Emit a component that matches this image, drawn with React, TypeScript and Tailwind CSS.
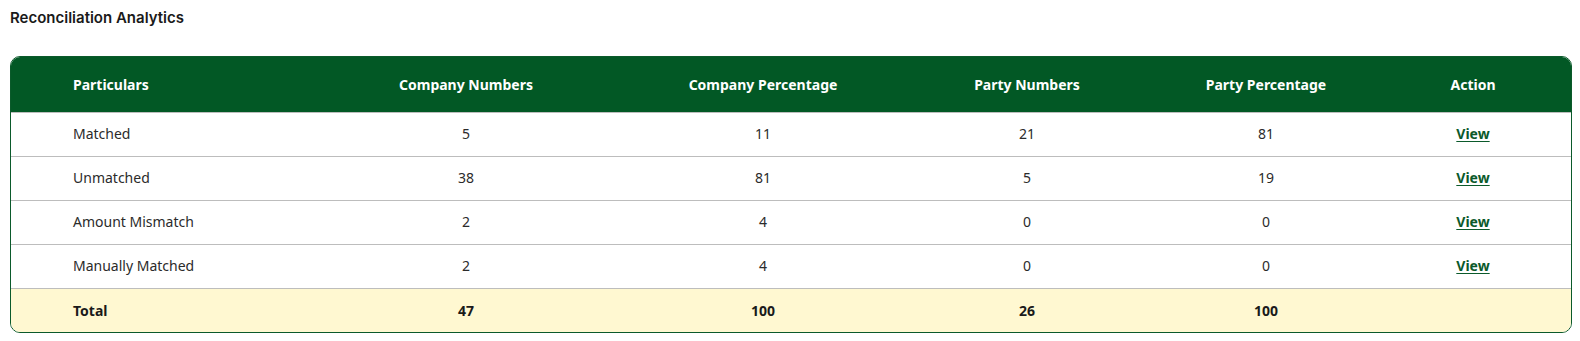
import React from 'react';

const rows = [
  { name: 'Matched', cn: 5, cp: 11, pn: 21, pp: 81 },
  { name: 'Unmatched', cn: 38, cp: 81, pn: 5, pp: 19 },
  { name: 'Amount Mismatch', cn: 2, cp: 4, pn: 0, pp: 0 },
  { name: 'Manually Matched', cn: 2, cp: 4, pn: 0, pp: 0 },
];

const cell = 'text-center';

export default function App() {
  return (
    <div className="bg-white w-[1580px] h-[341px] px-[10px] pt-[8px]">
      <h2 className="text-[15px] leading-[19px] font-semibold text-[#1a1a1a] font-['Inter',sans-serif]">
        Reconciliation Analytics
      </h2>
      <div className="mt-[29px] w-[1562px] border border-[#0b5a2b] rounded-[10px] overflow-hidden font-['Noto_Sans',sans-serif]">
        <table className="w-full table-fixed border-collapse text-[14px]">
          <colgroup>
            <col className="w-[307px]" />
            <col className="w-[296px]" />
            <col className="w-[298px]" />
            <col className="w-[230px]" />
            <col className="w-[248px]" />
            <col className="w-[166px]" />
            <col />
          </colgroup>
          <thead>
            <tr className="bg-[#025825] text-white h-[55px]">
              <th className="text-left pl-[62px] font-bold">Particulars</th>
              <th className={`${cell} font-bold`}>Company Numbers</th>
              <th className={`${cell} font-bold`}>Company Percentage</th>
              <th className={`${cell} font-bold`}>Party Numbers</th>
              <th className={`${cell} font-bold`}>Party Percentage</th>
              <th className={`${cell} font-bold`}>Action</th>
              <th />
            </tr>
          </thead>
          <tbody className="text-[#2b2b2b]">
            {rows.map((r) => (
              <tr key={r.name} className="h-[44px] border-t border-[#bdbdbd]">
                <td className="pl-[62px] pb-[2px]">{r.name}</td>
                <td className={`${cell} pb-[2px]`}>{r.cn}</td>
                <td className={`${cell} pb-[2px]`}>{r.cp}</td>
                <td className={`${cell} pb-[2px]`}>{r.pn}</td>
                <td className={`${cell} pb-[2px]`}>{r.pp}</td>
                <td className={`${cell} pb-[2px]`}>
                  <a href="#" className="font-bold text-[#0b5a2b] underline underline-offset-2">
                    View
                  </a>
                </td>
                <td />
              </tr>
            ))}
            <tr className="h-[44px] border-t border-[#bdbdbd] bg-[#fff8d1] font-bold text-[#1a1a1a]">
              <td className="pl-[62px]">Total</td>
              <td className={cell}>47</td>
              <td className={cell}>100</td>
              <td className={cell}>26</td>
              <td className={cell}>100</td>
              <td />
              <td />
            </tr>
          </tbody>
        </table>
      </div>
    </div>
  );
}
